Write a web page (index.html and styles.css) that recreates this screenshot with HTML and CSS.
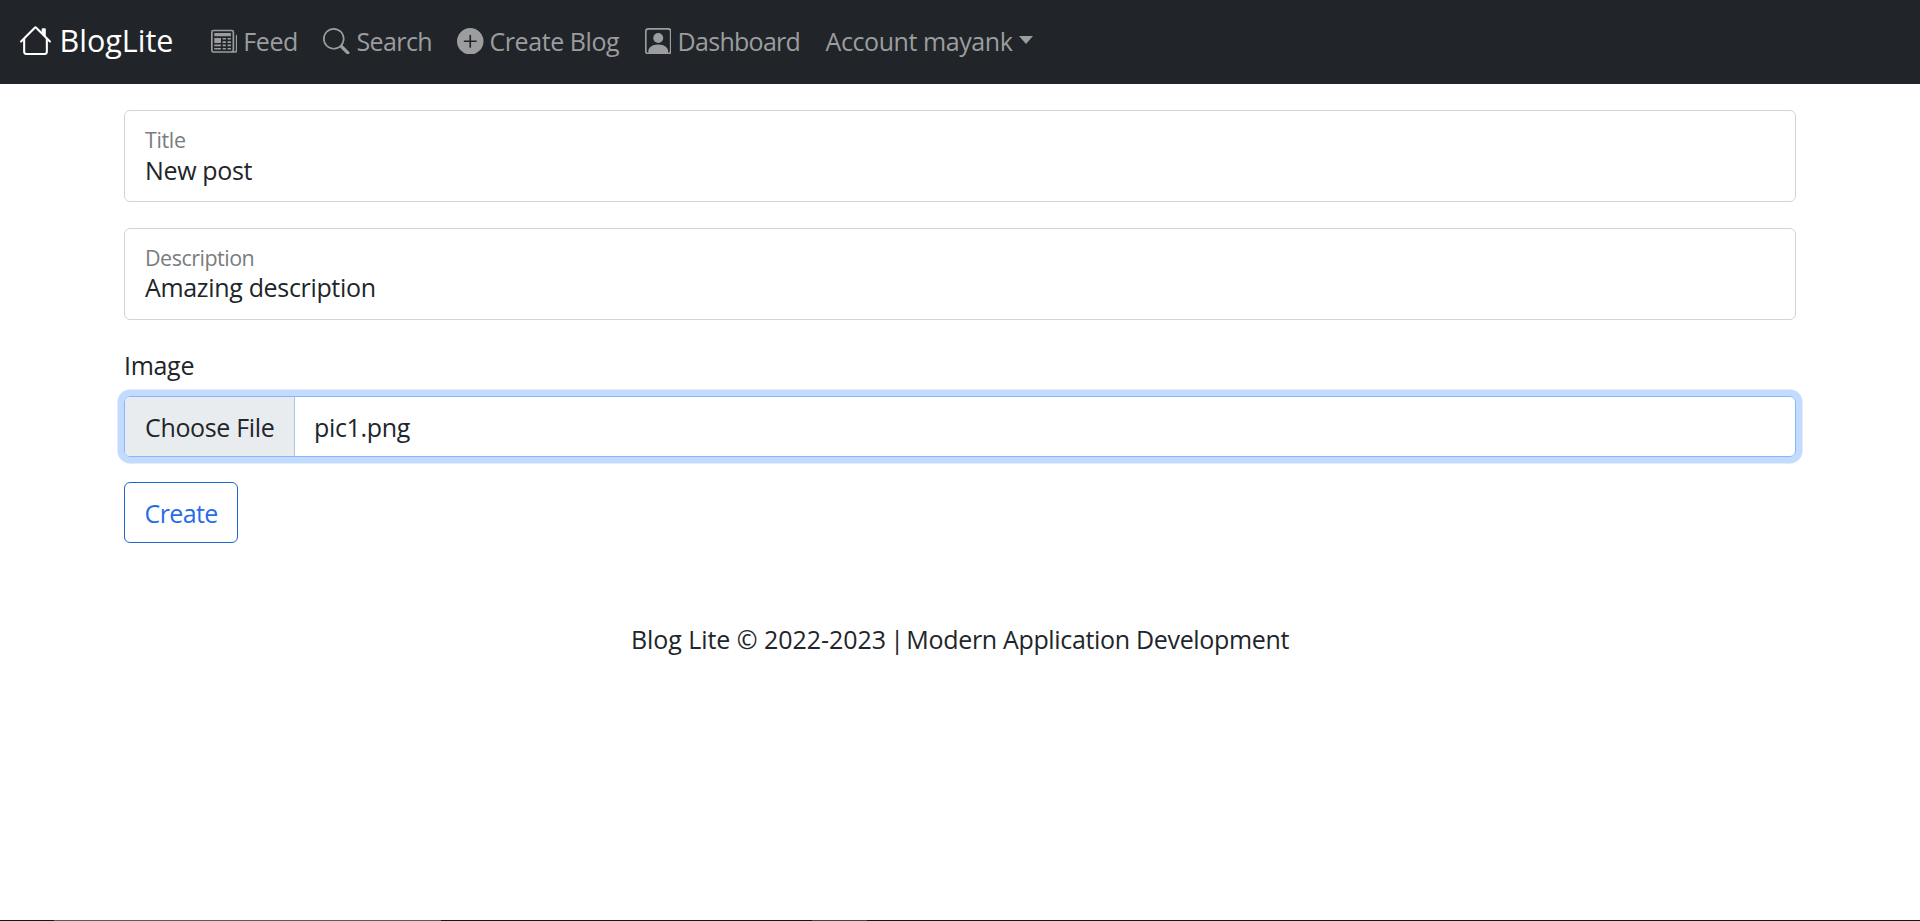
FILE: index.html
```
<!DOCTYPE html>
<html lang="en">
<head>
<meta charset="utf-8">
<title>BlogLite</title>
<link rel="stylesheet" href="styles.css">
</head>
<body>
<nav class="navbar">
  <a class="brand">
    <svg class="icon-home" viewBox="0 0 16 16" fill="currentColor"><path fill-rule="evenodd" d="M2 13.5V7h1v6.500a.5.5 0 0 0 .5.5h9a.5.5 0 0 0 .5-.5V7h1v6.500a1.500 1.500 0 0 1-1.500 1.500h-9A1.500 1.500 0 0 1 2 13.500zm11-11V6l-2-2V2.500a.5.5 0 0 1 .5-.5h1a.5.5 0 0 1 .5.5z"/><path fill-rule="evenodd" d="M7.293 1.500a1 1 0 0 1 1.414 0l6.647 6.646a.5.5 0 0 1-.708.708L8 2.207 1.354 8.854a.5.5 0 1 1-.708-.708L7.293 1.500z"/></svg>
    <span class="brand-name">BlogLite</span>
  </a>
  <a class="nav-link feed">
    <svg class="icon" viewBox="0 0 16 16" fill="currentColor"><path d="M0 2.500A1.500 1.500 0 0 1 1.500 1h11A1.500 1.500 0 0 1 14 2.500v10.528c0 .3-.05.654-.238.972h.738a.5.5 0 0 0 .5-.5v-9a.5.5 0 0 1 1 0v9a1.500 1.500 0 0 1-1.500 1.500H1.497A1.497 1.497 0 0 1 0 13.500v-11zM12 14c.37 0 .654-.211.853-.441.092-.106.147-.279.147-.531V2.500a.5.5 0 0 0-.5-.5h-11a.5.5 0 0 0-.5.5v11c0 .278.223.5.497.5H12z"/><path d="M2 3h10v2H2V3zm0 3h4v3H2V6zm0 4h4v1H2v-1zm0 2h4v1H2v-1zm5-6h2v1H7V6zm3 0h2v1h-2V6zM7 8h2v1H7V8zm3 0h2v1h-2V8zm-3 2h2v1H7v-1zm3 0h2v1h-2v-1zm-3 2h2v1H7v-1zm3 0h2v1h-2v-1z"/></svg>
    <span>Feed</span>
  </a>
  <a class="nav-link search">
    <svg class="icon" viewBox="0 0 16 16" fill="currentColor"><path d="M11.742 10.344a6.500 6.500 0 1 0-1.397 1.398h-.001c.03.04.062.078.098.115l3.850 3.850a1 1 0 0 0 1.415-1.414l-3.850-3.850a1.007 1.007 0 0 0-.115-.1zM12 6.500a5.500 5.500 0 1 1-11 0 5.500 5.500 0 0 1 11 0z"/></svg>
    <span>Search</span>
  </a>
  <a class="nav-link create">
    <svg class="icon" viewBox="0 0 16 16" fill="currentColor"><path d="M16 8A8 8 0 1 1 0 8a8 8 0 0 1 16 0zM8.500 4.500a.5.5 0 0 0-1 0v3h-3a.5.5 0 0 0 0 1h3v3a.5.5 0 0 0 1 0v-3h3a.5.5 0 0 0 0-1h-3v-3z"/></svg>
    <span>Create Blog</span>
  </a>
  <a class="nav-link dashboard">
    <svg class="icon" viewBox="0 0 16 16" fill="currentColor"><path d="M11 6a3 3 0 1 1-6 0 3 3 0 0 1 6 0z"/><path d="M2 0a2 2 0 0 0-2 2v12a2 2 0 0 0 2 2h12a2 2 0 0 0 2-2V2a2 2 0 0 0-2-2H2zm12 1a1 1 0 0 1 1 1v12a1 1 0 0 1-1 1v-1c0-1-1-4-6-4s-6 3-6 4v1a1 1 0 0 1-1-1V2a1 1 0 0 1 1-1h12z"/></svg>
    <span>Dashboard</span>
  </a>
  <a class="nav-link account"><span>Account mayank</span><i class="caret"></i></a>
</nav>
<main class="container">
  <div class="field">
    <div class="field-label">Title</div>
    <div class="field-value post-title">New post</div>
  </div>
  <div class="field">
    <div class="field-label description-label">Description</div>
    <div class="field-value description-value">Amazing description</div>
  </div>
  <div class="image-label">Image</div>
  <div class="file-input">
    <div class="file-button">Choose File</div>
    <div class="file-name">pic1.png</div>
  </div>
  <button class="submit">Create</button>
</main>
<footer class="footer"><span class="copyright">Blog Lite © 2022-2023</span><span class="divider"> | </span>Modern Application Development</footer>
<div class="edge"><div class="edge-a"></div><div class="edge-b"></div></div>
</body>
</html>
```
FILE: styles.css
```
* { box-sizing: border-box; }
body {
  margin: 0;
  height: 921px;
  display: flex;
  flex-direction: column;
  overflow: hidden;
  background: #fff;
  color: #212529;
  font: 25px/39px "Open Sans", sans-serif;
  letter-spacing: -0.33px;
}
.navbar {
  flex: none;
  display: flex;
  height: 84px;
  padding-left: 19px;
  background: #212529;
  white-space: nowrap;
}
.brand, .nav-link { display: flex; align-items: center; height: 82px; }
.brand { gap: 7.5px; color: #fff; margin-right: 24.5px; height: 80px; }
.brand-name { font-size: 30.5px; letter-spacing: 0; }
.icon-home { width: 33px; height: 33px; }
.nav-link { gap: 6px; padding: 0 12.7px; color: #9b9d9e; }
.icon { width: 26.5px; height: 26.5px; }
.search { gap: 6.5px; letter-spacing: -0.6px; }
.create { gap: 5.5px; letter-spacing: -0.42px; }
.dashboard { gap: 6.5px; letter-spacing: -0.715px; }
.account { gap: 7px; letter-spacing: -0.42px; }
.caret {
  border-top: 8px solid;
  border-left: 7.5px solid transparent;
  border-right: 7.5px solid transparent;
  margin-top: -3px;
}
.container { width: 1672px; margin: 26px auto 0; }
.field {
  height: 92px;
  margin-bottom: 26px;
  padding: 14px 20px 0;
  border: 1px solid #ced4da;
  border-radius: 6px;
}
.field-label {
  font-size: 21.5px;
  line-height: 30px;
  color: #7a7c7f;
  letter-spacing: -0.36px;
}
.description-label { letter-spacing: -0.5px; }
.field-value { line-height: 30px; letter-spacing: -0.33px; }
.post-title { letter-spacing: -0.35px; }
.description-value { line-height: 28px; }
.image-label { line-height: 38px; padding: 0 0 12px; letter-spacing: -0.3px; }
.file-input {
  display: flex;
  height: 61px;
  border: 1px solid #86b7fe;
  border-radius: 6px;
  box-shadow: 0 0 0 6.5px rgba(13, 110, 253, 0.25);
  line-height: 60px;
}
.file-button {
  width: 170px;
  padding-left: 20px;
  background: #e9ecef;
  border-right: 1px solid #a9c3ee;
  border-radius: 5px 0 0 5px;
  letter-spacing: -0.35px;
}
.file-name { padding-left: 19px; }
.submit {
  display: block;
  width: 114px;
  height: 61px;
  margin-top: 25px;
  padding: 0 0 0 19.5px;
  border: 1px solid #1f66d0;
  border-radius: 6px;
  background: transparent;
  color: #2a6bea;
  font: inherit;
  line-height: 60px;
  letter-spacing: -0.6px;
  text-align: left;
}
.footer { margin-top: 77px; text-align: center; }
.copyright { letter-spacing: -0.05px; }
.divider { letter-spacing: -2.1px; }
.edge { display: flex; height: 1px; margin-top: auto; padding-left: 54px; background: #17151a; }
.edge-a { width: 387px; background: #59595b; }
.edge-b { width: 55px; margin-left: 371px; background: #444446; }
```
